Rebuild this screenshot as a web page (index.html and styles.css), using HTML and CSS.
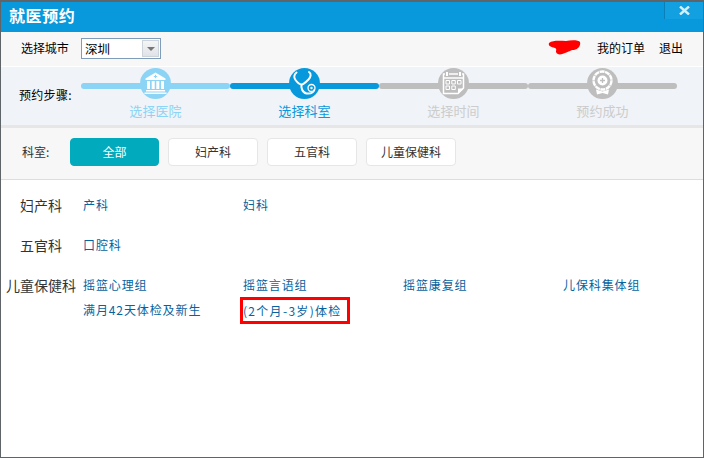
FILE: index.html
```html
<!DOCTYPE html>
<html lang="zh">
<head>
<meta charset="utf-8">
<title>就医预约</title>
<link rel="stylesheet" href="styles.css">
</head>
<body>
<div class="window">
  <header class="titlebar">
    <h1 class="title">就医预约</h1>
    <button class="close" aria-label="关闭">
      <svg width="11" height="9" viewBox="0 0 11 9"><path d="M1 .5l9 8M10 .5l-9 8" stroke="#d8eef9" stroke-width="2.400" fill="none"/></svg>
    </button>
  </header>
  <div class="topbar">
    <span class="city-label">选择城市</span>
    <div class="select">
      <span class="select-value">深圳</span>
      <span class="select-btn"><i class="arrow"></i></span>
    </div>
    <div class="user">
      <svg class="blot" width="34" height="16" viewBox="0 0 34 16"><path d="M1 3C5 0 12 1 18 1c5-1 13-1 14 1 1 4-2 7-6 8-4 0-5 2-9 3-4 2-8 2-9-1 0-2 1-3-1-4C3 7 0 6 1 3z" fill="#f00"/></svg>
      <a class="user-link">我的订单</a>
      <a class="user-link">退出</a>
    </div>
  </div>
  <section class="stepsbar">
    <span class="steps-label">预约步骤:</span>
    <ol class="steps">
      <li class="step done">
        <svg class="step-icon" width="31" height="31" viewBox="0 0 31 31">
          <circle cx="15.500" cy="15.500" r="15.500" fill="#8cd4f6"/>
          <path d="M15.500 4.500L25.500 10.500V12H5.500V10.500Z" fill="#fff"/>
          <path d="M15.500 6.800v3.400M13.800 8.500h3.400" stroke="#8cd4f6" stroke-width="1"/>
          <path d="M7 13h3v8H7zM11.700 13h3v8h-3zM16.300 13h3v8h-3zM21 13h3v8h-3z" fill="#fff"/>
          <path d="M6 22h19v1.500H6zM4.500 24.500h22V26h-22z" fill="#fff"/>
        </svg>
        <span class="step-name">选择医院</span>
      </li>
      <li class="step current">
        <svg class="step-icon" width="31" height="31" viewBox="0 0 31 31">
          <circle cx="15.500" cy="15.500" r="15.500" fill="#0899dc"/>
          <path d="M7.500 4.500C5 6.500 4.500 9.500 6.500 12c1.500 2 4.500 4.500 6 4.500s4.500-2.500 7-5c2.500-2.500 3-6 .5-7.500" fill="none" stroke="#fff" stroke-width="2" stroke-linecap="round"/>
          <path d="M12.500 16.500c-.5 3 .5 8 5 9 4 .5 7-1 8-4" fill="none" stroke="#fff" stroke-width="2"/>
          <circle cx="22.500" cy="20" r="3.500" fill="none" stroke="#fff" stroke-width="1.300"/>
          <circle cx="22.500" cy="20" r="1.200" fill="#fff"/>
        </svg>
        <span class="step-name">选择科室</span>
      </li>
      <li class="step">
        <svg class="step-icon" width="31" height="31" viewBox="0 0 31 31">
          <circle cx="15.500" cy="15.500" r="15.500" fill="#bfbebe"/>
          <path d="M9 4v4M22 4v4" stroke="#fff" stroke-width="2"/>
          <path d="M7 6H5.500v19.500H20l5.500-5.500V6H24M11 6h9" fill="none" stroke="#fff" stroke-width="1.500"/>
          <path d="M6 10h19" stroke="#fff" stroke-width="1.500"/>
          <path d="M8 12.500h3.500V16H8zM13.800 12.500h3.500V16h-3.500zM19.500 12.500H23V16h-3.500zM8 18h3.500v3.500H8zM13.800 18h3.500v3.500h-3.500z" fill="none" stroke="#fff"/>
          <path d="M20 26v-5.500h6z" fill="#fff"/>
        </svg>
        <span class="step-name">选择时间</span>
      </li>
      <li class="step">
        <svg class="step-icon" width="31" height="31" viewBox="0 0 31 31">
          <circle cx="15.500" cy="15.500" r="15.500" fill="#bfbebe"/>
          <circle cx="15.500" cy="12.500" r="9" fill="none" stroke="#fff" stroke-width="2.400" stroke-dasharray="5 .6"/>
          <circle cx="15.500" cy="12.500" r="5" fill="#fff"/>
          <path d="M15.500 10v5M13 12.500h5" stroke="#bfbebe" stroke-width="1.300"/>
          <path d="M9 21.500l6.500 2 6.500-2-1 5-5.500-1.500-5.500 1.500z" fill="#fff"/>
        </svg>
        <span class="step-name">预约成功</span>
      </li>
    </ol>
  </section>
  <div class="band"></div>
  <nav class="filter">
    <span class="filter-label">科室:</span>
    <button class="chip active">全部</button>
    <button class="chip">妇产科</button>
    <button class="chip">五官科</button>
    <button class="chip">儿童保健科</button>
  </nav>
  <main class="content">
    <div class="group">
      <h2 class="group-name">妇产科</h2>
      <div class="links">
        <a class="link">产科</a>
        <a class="link">妇科</a>
      </div>
    </div>
    <div class="group">
      <h2 class="group-name">五官科</h2>
      <div class="links">
        <a class="link">口腔科</a>
      </div>
    </div>
    <div class="group">
      <h2 class="group-name">儿童保健科</h2>
      <div class="links">
        <a class="link">摇篮心理组</a>
        <a class="link">摇篮言语组</a>
        <a class="link">摇篮康复组</a>
        <a class="link">儿保科集体组</a>
        <a class="link">满月42天体检及新生</a>
        <a class="link boxed">(2个月-3岁)体检</a>
      </div>
    </div>
  </main>
</div>
</body>
</html>
```
FILE: styles.css
```css
* { box-sizing: border-box; }
html, body { margin: 0; padding: 0; background: #fff; }
body { font-family: "Noto Sans CJK SC", "Liberation Sans", sans-serif; font-size: 12px; color: #333; }
.window {
  width: 704px;
  height: 458px;
  border: 1px solid #5f6468;
  border-top-width: 2px;
  display: flex;
  flex-direction: column;
  overflow: hidden;
}
.titlebar {
  height: 30px;
  flex: none;
  background: #0899dc;
  display: flex;
  justify-content: space-between;
  padding-left: 8px;
}
.title { margin: 0; font-size: 16px; font-weight: 700; letter-spacing: .6px; color: #fff; line-height: 26px; }
.close {
  width: 39px;
  height: 17px;
  padding: 0;
  border: 0;
  border-left: 1px solid #0a80b9;
  background: #13a0e0;
  display: flex;
  align-items: center;
  justify-content: center;
}
.topbar {
  height: 35px;
  flex: none;
  background: #f7f7f7;
  border-bottom: 1px solid #fff;
  display: flex;
  align-items: center;
  padding: 0 20px;
  color: #000;
}
.city-label { width: 60px; margin-bottom: 4px; letter-spacing: -.1px; }
.select {
  width: 80px;
  height: 21px;
  margin-bottom: 1px;
  background: #fff;
  border: 1px solid #7f9db9;
  display: flex;
  align-items: center;
  justify-content: space-between;
  padding: 1px;
}
.select-value { padding: 0 0 1px 2px; font-size: 12.500px; color: #000; }
.select-btn {
  width: 17px;
  height: 17px;
  background: linear-gradient(#f5f5f5, #dfe3e8);
  border: 1px solid #cdd3da;
  display: flex;
  align-items: center;
  justify-content: center;
}
.arrow { width: 0; height: 0; border: 4px solid transparent; border-top-color: #777; border-bottom: 0; }
.user { margin-left: auto; margin-bottom: 4px; display: flex; align-items: center; }
.blot { margin-right: 15px; margin-top: 1px; }
.user-link { color: #000; margin-right: 14px; }
.user-link:last-child { margin-right: 0; }
.stepsbar {
  height: 58px;
  flex: none;
  background: #f0f3f7;
  display: flex;
  padding-left: 18px;
}
.steps-label { width: 62px; padding-top: 19px; color: #000; white-space: nowrap; letter-spacing: .3px; }
.steps {
  list-style: none;
  margin: 0;
  padding: 0;
  display: grid;
  grid-template-columns: repeat(4, 149px);
}
.step {
  position: relative;
  display: flex;
  flex-direction: column;
  align-items: center;
  color: #ccc;
  font-size: 13px;
}
.step::before {
  content: "";
  position: absolute;
  left: 0;
  right: 0;
  top: 16px;
  height: 6px;
  border-radius: 3px;
  background: #bfbebe;
}
.step.done { color: #8cd4f6; }
.step.done::before { background: #8cd4f6; }
.step.current { color: #0899dc; }
.step.current::before { background: #0899dc; z-index: 1; }
.step-icon { position: relative; z-index: 2; margin-top: 1px; display: block; flex: none; }
.step-name { line-height: 18px; margin-top: 3px; letter-spacing: .1px; }
.band { height: 3px; flex: none; background: #e6e6e6; }
.filter {
  height: 52px;
  flex: none;
  background: #f7f7f7;
  border-bottom: 1px solid #ddd;
  display: flex;
  align-items: center;
  padding: 0 0 4px 21px;
  gap: 9px;
}
.filter-label { width: 37px; margin-right: 2px; font-size: 12px; color: #333; }
.chip {
  width: 90px;
  height: 28px;
  padding: 0;
  font: inherit;
  color: #333;
  background: #fff;
  border: 1px solid #e6e6e6;
  border-radius: 4px;
}
.chip.active { width: 89px; background: #02aabd; border-color: #02aabd; color: #fff; }
.content { flex: 1; background: #fff; padding-top: 13px; }
.group { display: flex; margin-bottom: 15px; }
.group-name {
  width: 80px;
  flex: none;
  margin: 0;
  font-size: 14px;
  font-weight: 400;
  line-height: 25px;
  height: 25px;
  text-align: center;
  color: #333;
  white-space: nowrap;
}
.links {
  flex: 1;
  padding-left: 2px;
  display: grid;
  grid-template-columns: repeat(4, 160px);
  grid-auto-rows: 25px;
}
.link { color: #05639f; line-height: 24px; font-size: 12px; letter-spacing: .9px; white-space: nowrap; }
.boxed {
  justify-self: start;
  align-self: start;
  height: 27px;
  width: 110px;
  margin: -1px 0 0 -3px;
  padding-left: 0;
  line-height: 21px;
  border: 3px solid #f00;
  letter-spacing: 1.300px;
}
```
